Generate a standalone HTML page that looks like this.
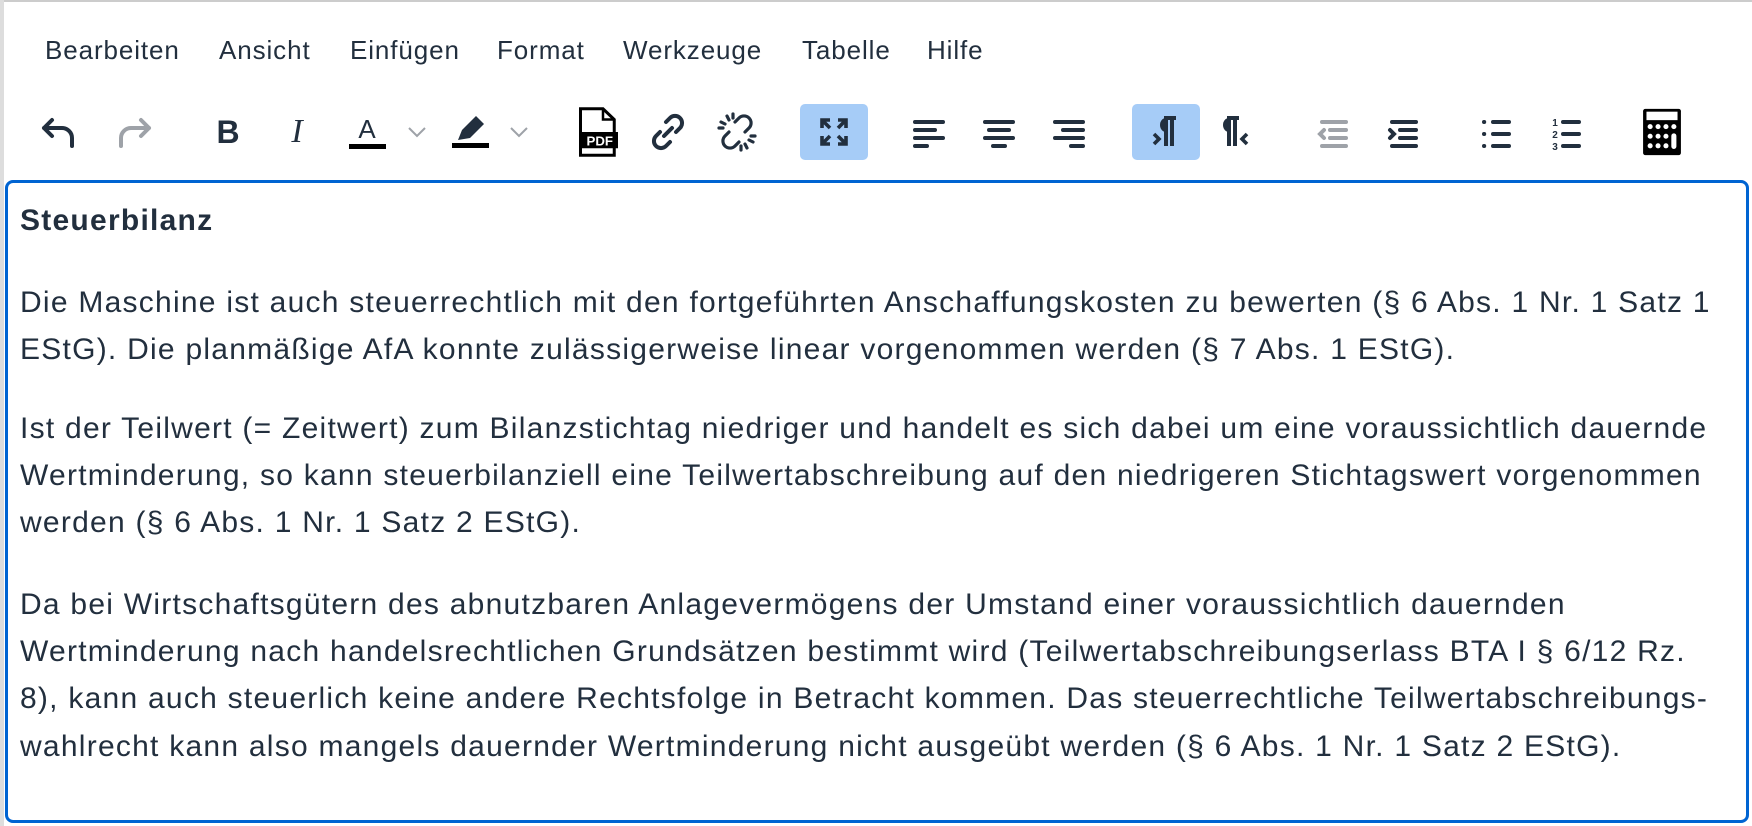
<!DOCTYPE html>
<html><head><meta charset="utf-8"><style>
*{margin:0;padding:0;box-sizing:border-box}
body{width:1752px;height:826px;background:#fff;position:relative;overflow:hidden;font-family:"Liberation Sans",sans-serif;color:#222f3e}
.menu{position:absolute;top:35px;font-size:26px;letter-spacing:0.9px;color:#222f3e;line-height:30px}
.ic{position:absolute;top:104px;width:56px;height:56px;display:flex;align-items:center;justify-content:center}
.act{background:#a6ccf7;border-radius:5px;width:68px;height:56px}
.ed{position:absolute;left:5px;top:180px;width:1744px;height:643px;border:3px solid #0064d2;border-radius:8px}
.ln{position:absolute;left:20px;font-size:30px;letter-spacing:1.25px;line-height:47px;white-space:nowrap;color:#222f3e}
</style></head><body>
<div style="position:absolute;left:0;top:0;width:1752px;height:2px;background:#ccc"></div>
<div style="position:absolute;left:0;top:0;width:4px;height:826px;background:#ddd"></div>

<div class="menu" style="left:45px">Bearbeiten</div>
<div class="menu" style="left:219px">Ansicht</div>
<div class="menu" style="left:350px">Einfügen</div>
<div class="menu" style="left:497px">Format</div>
<div class="menu" style="left:623px">Werkzeuge</div>
<div class="menu" style="left:802px">Tabelle</div>
<div class="menu" style="left:927px">Hilfe</div>

<div class="ic" style="left:32px"><svg width="48" height="48" viewBox="0 0 24 24"><path d="M8 6 L4 10 L8 14 M4 10 H13 a5 5 0 0 1 5 5 V19" fill="none" stroke="#222f3e" stroke-width="2" stroke-linecap="round" stroke-linejoin="round"/></svg></div>
<div class="ic" style="left:105px"><svg width="48" height="48" viewBox="0 0 24 24"><path d="M16 6 L20 10 L16 14 M20 10 H11 a5 5 0 0 0 -5 5 V19" fill="none" stroke="#9ea2a8" stroke-width="2" stroke-linecap="round" stroke-linejoin="round"/></svg></div>
<div class="ic" style="left:200px;font:bold 32px 'Liberation Sans';color:#222f3e">B</div>
<div class="ic" style="left:269px;font:italic 34px 'Liberation Serif';color:#222f3e">I</div>
<div class="ic" style="left:339px;flex-direction:column"><span style="font:26px 'Liberation Sans';color:#222f3e;line-height:26px">A</span><div style="width:37px;height:5px;background:#000;margin-top:2px"></div></div>
<div class="ic" style="left:405px;width:24px"><svg width="20" height="12" viewBox="0 0 20 12"><path d="M2 2 L10 10 L18 2" fill="none" stroke="#9ea2a8" stroke-width="2"/></svg></div>
<div class="ic" style="left:442px;flex-direction:column"><svg width="36" height="26" viewBox="0 0 18 13"><path d="M3 12 L5 7 L12 0 L16 4 L9 11 Z" fill="#222f3e"/></svg><div style="width:37px;height:5px;background:#000;margin-top:1px"></div></div>
<div class="ic" style="left:507px;width:24px"><svg width="20" height="12" viewBox="0 0 20 12"><path d="M2 2 L10 10 L18 2" fill="none" stroke="#9ea2a8" stroke-width="2"/></svg></div>
<div class="ic" style="left:570px"><svg width="40" height="50" viewBox="0 0 16 20"><path d="M1 0.7 H10 L14.5 5 V19.3 H1 Z" fill="#fff" stroke="#000" stroke-width="1.2"/><path d="M10 0.7 V5 H14.5" fill="none" stroke="#000" stroke-width="1"/><rect x="1.5" y="10" width="14.5" height="6.5" fill="#000"/><text x="8.7" y="15.3" font-size="5.3" font-weight="bold" fill="#fff" text-anchor="middle" font-family="Liberation Sans">PDF</text></svg></div>
<div class="ic" style="left:640px"><svg width="48" height="48" viewBox="0 0 24 24"><path d="M10 14 L14 10 M11 7 l2-2 a3 3 0 0 1 5 5 l-2 2 M13 17 l-2 2 a3 3 0 0 1 -5 -5 l2-2" fill="none" stroke="#222f3e" stroke-width="2" stroke-linecap="round"/></svg></div>
<div class="ic" style="left:709px"><svg width="48" height="48" viewBox="0 0 24 24"><path d="M11 7 l2-2 a3 3 0 0 1 5 5 l-2 2 M13 17 l-2 2 a3 3 0 0 1 -5 -5 l2-2 M7 4 l1 2 M4 7 l2 1 M17 20 l-1-2 M20 17 l-2-1 M10 3 v2 M3 10 h2 M14 21 v-2 M21 14 h-2" fill="none" stroke="#222f3e" stroke-width="1.6" stroke-linecap="round"/></svg></div>
<div class="ic act" style="left:800px"><svg width="48" height="48" viewBox="0 0 24 24"><path d="M6 10 V6 H10 M6 6 L10 10 M18 10 V6 H14 M18 6 L14 10 M6 14 V18 H10 M6 18 L10 14 M18 14 V18 H14 M18 18 L14 14" fill="none" stroke="#222f3e" stroke-width="1.8"/></svg></div>
<div class="ic" style="left:901px"><svg width="48" height="48" viewBox="0 0 24 24"><g stroke="#222f3e" stroke-width="2" stroke-linecap="round"><path d="M5 7 H19 M5 11 H15 M5 15 H19 M5 19 H11"/></g></svg></div>
<div class="ic" style="left:971px"><svg width="48" height="48" viewBox="0 0 24 24"><g stroke="#222f3e" stroke-width="2" stroke-linecap="round"><path d="M5 7 H19 M7 11 H17 M5 15 H19 M9 19 H15"/></g></svg></div>
<div class="ic" style="left:1041px"><svg width="48" height="48" viewBox="0 0 24 24"><g stroke="#222f3e" stroke-width="2" stroke-linecap="round"><path d="M5 7 H19 M9 11 H19 M5 15 H19 M13 19 H19"/></g></svg></div>
<div class="ic act" style="left:1132px"><svg width="48" height="48" viewBox="0 0 24 24"><path d="M11 5 H17 M12 5 V19 M15 5 V19" stroke="#222f3e" stroke-width="2" fill="none"/><path d="M12 5 a3 3.5 0 0 0 0 7 Z" fill="#222f3e"/><path d="M6 13 L8.5 15.5 L6 18" stroke="#222f3e" stroke-width="1.8" fill="none"/></svg></div>
<div class="ic" style="left:1207px"><svg width="48" height="48" viewBox="0 0 24 24"><path d="M8 5 H14 M9 5 V19 M12 5 V19" stroke="#222f3e" stroke-width="2" fill="none"/><path d="M9 5 a3 3.5 0 0 0 0 7 Z" fill="#222f3e"/><path d="M18 13 L15.5 15.5 L18 18" stroke="#222f3e" stroke-width="1.8" fill="none"/></svg></div>
<div class="ic" style="left:1304px"><svg width="48" height="48" viewBox="0 0 24 24"><g stroke="#9ea2a8" stroke-width="2" stroke-linecap="round" fill="none"><path d="M7 7 H19 M11 11 H19 M11 15 H19 M7 19 H19 M8 11 L6 13 L8 15"/></g></svg></div>
<div class="ic" style="left:1374px"><svg width="48" height="48" viewBox="0 0 24 24"><g stroke="#222f3e" stroke-width="2" stroke-linecap="round" fill="none"><path d="M7 7 H19 M11 11 H19 M11 15 H19 M7 19 H19 M6 11 L8 13 L6 15"/></g></svg></div>
<div class="ic" style="left:1469px"><svg width="48" height="48" viewBox="0 0 24 24"><g stroke="#222f3e" stroke-width="2" stroke-linecap="round" fill="none"><path d="M10 7 H18 M10 13 H18 M10 19 H18 M5.5 7 h0.1 M5.5 13 h0.1 M5.5 19 h0.1"/></g></svg></div>
<div class="ic" style="left:1539px"><svg width="48" height="48" viewBox="0 0 24 24"><g stroke="#222f3e" stroke-width="2" stroke-linecap="round" fill="none"><path d="M10 7 H18 M10 13 H18 M10 19 H18"/></g><text x="6" y="9" font-size="5" font-family="Liberation Sans" font-weight="bold" fill="#222f3e" text-anchor="middle">1</text><text x="6" y="15" font-size="5" font-family="Liberation Sans" font-weight="bold" fill="#222f3e" text-anchor="middle">2</text><text x="6" y="21" font-size="5" font-family="Liberation Sans" font-weight="bold" fill="#222f3e" text-anchor="middle">3</text></svg></div>
<div class="ic" style="left:1634px"><svg width="40" height="48" viewBox="0 0 14 17"><rect x="0.3" y="0.3" width="13.4" height="16.4" rx="0.8" fill="#000"/><rect x="1.5" y="1.3" width="11" height="3" fill="#fff"/><g fill="#fff"><circle cx="2.8" cy="6.6" r="0.9"/><circle cx="5.6" cy="6.6" r="0.9"/><circle cx="8.4" cy="6.6" r="0.9"/><circle cx="11.2" cy="6.6" r="0.9"/><circle cx="2.8" cy="10" r="0.9"/><circle cx="5.6" cy="10" r="0.9"/><circle cx="8.4" cy="10" r="0.9"/><circle cx="2.8" cy="13.4" r="0.9"/><circle cx="5.6" cy="13.4" r="0.9"/><circle cx="8.4" cy="13.4" r="0.9"/><rect x="10.3" y="9" width="1.8" height="5.5" rx="0.9"/></g></svg></div>

<div class="ed"></div>
<div class="ln" style="top:197px;font-weight:bold">Steuerbilanz</div>
<div class="ln" style="top:279px">Die Maschine ist auch steuerrechtlich mit den fortgeführten Anschaffungskosten zu bewerten (§ 6 Abs. 1 Nr. 1 Satz 1</div>
<div class="ln" style="top:326px">EStG). Die planmäßige AfA konnte zulässigerweise linear vorgenommen werden (§ 7 Abs. 1 EStG).</div>
<div class="ln" style="top:405px">Ist der Teilwert (= Zeitwert) zum Bilanzstichtag niedriger und handelt es sich dabei um eine voraussichtlich dauernde</div>
<div class="ln" style="top:452px">Wertminderung, so kann steuerbilanziell eine Teilwertabschreibung auf den niedrigeren Stichtagswert vorgenommen</div>
<div class="ln" style="top:499px">werden (§ 6 Abs. 1 Nr. 1 Satz 2 EStG).</div>
<div class="ln" style="top:581px">Da bei Wirtschaftsgütern des abnutzbaren Anlagevermögens der Umstand einer voraussichtlich dauernden</div>
<div class="ln" style="top:628px">Wertminderung nach handelsrechtlichen Grundsätzen bestimmt wird (Teilwertabschreibungserlass BTA I § 6/12 Rz.</div>
<div class="ln" style="top:675px">8), kann auch steuerlich keine andere Rechtsfolge in Betracht kommen. Das steuerrechtliche Teilwertabschreibungs-</div>
<div class="ln" style="top:723px">wahlrecht kann also mangels dauernder Wertminderung nicht ausgeübt werden (§ 6 Abs. 1 Nr. 1 Satz 2 EStG).</div>
</body></html>
